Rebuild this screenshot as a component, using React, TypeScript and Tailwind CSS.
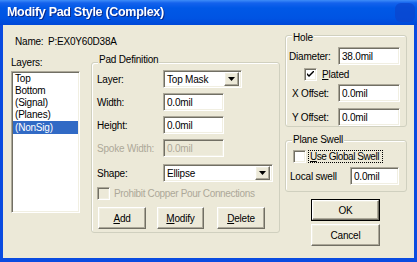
import React from "react";

const sunken =
  "border border-t-[#ACA899] border-l-[#ACA899] border-b-white border-r-white shadow-[inset_1px_1px_0_#716F64,inset_-1px_-1px_0_#F1EFE2]";
const raised =
  "border border-t-white border-l-white border-b-[#716F64] border-r-[#716F64] shadow-[inset_-1px_-1px_0_#ACA899,inset_1px_1px_0_#F1EFE2]";

function TextBox({ value, w, disabled }: { value: string; w: string; disabled?: boolean }) {
  return (
    <div
      className={`${sunken} ${w} h-[18px] flex items-center pl-[3px] ${
        disabled ? "bg-[#ECE9D8] text-[#ACA899]" : "bg-white text-black"
      }`}
    >
      {value}
    </div>
  );
}

function Arrow() {
  return (
    <div className={`${raised} w-[15px] h-[14px] bg-[#ECE9D8] flex items-center justify-center`}>
      <svg width="7" height="4" viewBox="0 0 7 4">
        <path d="M0 0h7L3.5 4z" fill="#000" />
      </svg>
    </div>
  );
}

function Combo({ value, w }: { value: string; w: string }) {
  return (
    <div className={`${sunken} ${w} h-[18px] bg-white flex items-center justify-between pl-[3px] pr-[2px]`}>
      <span>{value}</span>
      <Arrow />
    </div>
  );
}

function Check({ checked, disabled }: { checked?: boolean; disabled?: boolean }) {
  return (
    <div
      className={`${sunken} w-[13px] h-[13px] shrink-0 flex items-center justify-center ${
        disabled ? "bg-[#ECE9D8]" : "bg-white"
      }`}
    >
      {checked && (
        <svg width="7" height="7" viewBox="0 0 7 7">
          <path d="M0 2l2 2 5-5v2L2 6 0 4z" fill="#000" />
        </svg>
      )}
    </div>
  );
}

function Button({ children, w, def }: { children: React.ReactNode; w: string; def?: boolean }) {
  return (
    <div className={`${w} h-[22px] ${def ? "border border-black" : ""}`}>
      <div className={`${raised} w-full h-full bg-[#ECE9D8] flex items-center justify-center`}>
        {children}
      </div>
    </div>
  );
}

function GroupLabel({ children, cls }: { children: React.ReactNode; cls: string }) {
  return <div className={`${cls} px-[1px] w-fit h-[13px] bg-[#ECE9D8] whitespace-nowrap`}>{children}</div>;
}

const group = "border border-[#D0D0BF] rounded-[3px] shadow-[inset_1px_1px_0_white]";

export default function App() {
  return (
    <div className="w-[417px] h-[262px] overflow-hidden font-['Liberation_Sans',Arial,sans-serif] text-[10px] leading-[13px] tracking-[-0.2px] text-black bg-[#0831D9]">
      <div className="flex flex-col w-full h-full border-x-[3px] border-b-[4px] border-[#0A4BE0]">
        {/* Title bar */}
        <div className="relative h-[25px] -mx-[3px] shrink-0 bg-[linear-gradient(to_bottom,#3E8DF8_0px,#1462ED_3px,#0058E6_8px,#0054E3_18px,#0048D8_25px)] flex items-center pl-[7px]">
          <span className="text-white font-bold text-[12.5px] tracking-[-0.3px] drop-shadow-[1px_1px_0_#0A2A8A]">
            Modify Pad Style (Complex)
          </span>
          <div className="absolute right-[2px] top-[3px] w-[20px] h-[19px] rounded-[6px] bg-[#0B44CC] opacity-70" />
        </div>
        {/* Body */}
        <div className="flex-1 bg-[#ECE9D8] flex">
          {/* Left section */}
          <div className="w-[282px] flex flex-col">
            <div className="mt-[10px] pl-[12px] h-[13px] flex">
              <span className="w-[33px]">Name:</span>
              <span>P:EX0Y60D38A</span>
            </div>
            <div className="flex mt-[5px]">
              {/* Layers */}
              <div className="pl-[8px] flex flex-col">
                <div className="mt-[3px] h-[13px]">Layers:</div>
                <div className={`${sunken} mt-[2px] w-[69px] h-[142px] bg-white p-[1px] flex flex-col`}>
                  <div className="h-[12px] leading-[12px] pl-[2px]">Top</div>
                  <div className="h-[12px] leading-[12px] pl-[2px]">Bottom</div>
                  <div className="h-[12px] leading-[12px] pl-[2px]">(Signal)</div>
                  <div className="h-[12px] leading-[12px] pl-[2px]">(Planes)</div>
                  <div className="h-[13px] leading-[13px] pl-[2px] bg-[#316AC5] text-white">(NonSig)</div>
                </div>
              </div>
              {/* Pad Definition */}
              <div className={`${group} ml-[11px] mt-[9px] w-[189px] h-[171px] flex flex-col pl-[5px]`}>
                <GroupLabel cls="-mt-[10px] ml-[1px]">Pad Definition</GroupLabel>
                <div className="mt-[4px] flex items-center h-[18px]">
                  <span className="w-[66px]">Layer:</span>
                  <Combo value="Top Mask" w="w-[79px]" />
                </div>
                <div className="mt-[5px] flex items-center h-[18px]">
                  <span className="w-[66px]">Width:</span>
                  <TextBox value="0.0mil" w="w-[61px]" />
                </div>
                <div className="mt-[5px] flex items-center h-[18px]">
                  <span className="w-[66px]">Height:</span>
                  <TextBox value="0.0mil" w="w-[61px]" />
                </div>
                <div className="mt-[5px] flex items-center h-[18px]">
                  <span className="w-[66px] text-[#ACA899]">Spoke Width:</span>
                  <TextBox value="0.0mil" w="w-[61px]" disabled />
                </div>
                <div className="mt-[7px] flex items-center h-[18px]">
                  <span className="w-[66px]">Shape:</span>
                  <Combo value="Ellipse" w="w-[110px]" />
                </div>
                <div className="mt-[5px] flex items-center h-[13px] gap-[4px]">
                  <Check disabled />
                  <span className="text-[#ACA899] whitespace-nowrap tracking-[-0.35px]">
                    Prohibit Copper Pour Connections
                  </span>
                </div>
                <div className="mt-[7px] flex pl-[1px] h-[22px]">
                  <Button w="w-[48px]">
                    <span>
                      <u>A</u>dd
                    </span>
                  </Button>
                  <div className="ml-[11px]">
                    <Button w="w-[47px]">
                      <span>
                        <u>M</u>odify
                      </span>
                    </Button>
                  </div>
                  <div className="ml-[13px]">
                    <Button w="w-[48px]">
                      <span>
                        <u>D</u>elete
                      </span>
                    </Button>
                  </div>
                </div>
              </div>
            </div>
          </div>
          {/* Right section */}
          <div className="w-[122px] flex flex-col">
            <div className={`${group} mt-[10px] h-[92px] flex flex-col`}>
              <GroupLabel cls="-mt-[5px] ml-[6px]">Hole</GroupLabel>
              <div className="mt-[3px] flex items-center h-[18px] pl-[3px]">
                <span className="w-[49px]">Diameter:</span>
                <TextBox value="38.0mil" w="w-[62px]" />
              </div>
              <div className="mt-[3px] flex items-center h-[13px] pl-[18px] gap-[5px]">
                <Check checked />
                <span>
                  <u>P</u>lated
                </span>
              </div>
              <div className="mt-[3px] flex items-center h-[18px] pl-[6px]">
                <span className="w-[46px]">X Offset:</span>
                <TextBox value="0.0mil" w="w-[62px]" />
              </div>
              <div className="mt-[6px] flex items-center h-[18px] pl-[6px]">
                <span className="w-[46px]">Y Offset:</span>
                <TextBox value="0.0mil" w="w-[62px]" />
              </div>
            </div>
            <div className={`${group} mt-[13px] h-[52px] flex flex-col`}>
              <GroupLabel cls="-mt-[8px] ml-[6px]">Plane Swell</GroupLabel>
              <div className="mt-[4px] flex items-center h-[13px] pl-[7px] gap-[2px]">
                <Check />
                <span className="border border-dotted border-black pl-[1px] w-[75px] h-[13px] leading-[11px] tracking-[-0.45px] whitespace-nowrap">
                  <u>U</u>se Global Swell
                </span>
              </div>
              <div className="mt-[4px] flex items-center h-[18px] pl-[4px]">
                <span className="w-[60px]">Local swell</span>
                <TextBox value="0.0mil" w="w-[49px]" />
              </div>
            </div>
            <div className="mt-[7px] pl-[26px] flex flex-col gap-[3px]">
              <Button w="w-[69px]" def>
                OK
              </Button>
              <Button w="w-[69px]">Cancel</Button>
            </div>
          </div>
        </div>
      </div>
    </div>
  );
}
